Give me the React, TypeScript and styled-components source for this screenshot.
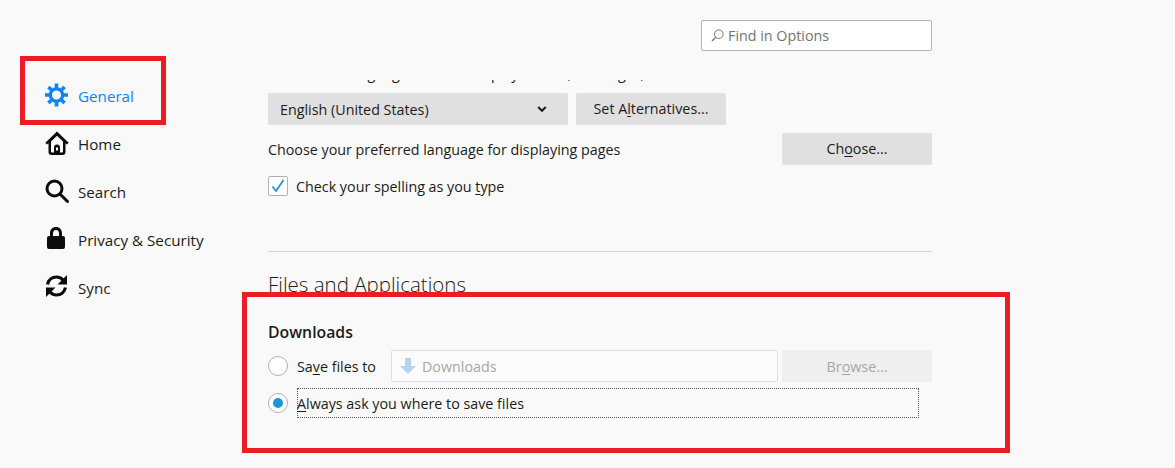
import React from "react";
import styled, { createGlobalStyle } from "styled-components";

const Global = createGlobalStyle`
  html, body { margin: 0; padding: 0; background: #f9f9fa; }
  body { font-family: "Open Sans", "Noto Sans", sans-serif; font-size: 14.3px; color: #1c1c20; }
  #root { width: 1175px; height: 468px; overflow: hidden; }
`;

const Page = styled.div`
  position: relative;
  display: flex;
  width: 1175px;
  height: 468px;
`;

const Sidebar = styled.nav`
  width: 268px;
  flex: none;
  padding: 72px 0 0 45px;
  box-sizing: border-box;
  display: flex;
  flex-direction: column;
`;

const NavItem = styled.div<{ $active?: boolean }>`
  display: flex;
  align-items: center;
  gap: 9px;
  height: 48px;
  font-size: 15.2px;
  color: ${(p) => (p.$active ? "#0a84ff" : "#1c1c20")};
  svg { width: 24px; height: 24px; flex: none; margin-top: -2px; color: ${(p) => (p.$active ? "#0a84ff" : "#0c0c0d")}; }
`;

const Main = styled.main`
  width: 664px;
  flex: none;
  display: flex;
  flex-direction: column;
  padding-top: 20px;
  box-sizing: border-box;
`;

const SearchBox = styled.div`
  align-self: flex-end;
  width: 231px;
  height: 31px;
  box-sizing: border-box;
  background: #fff;
  border: 1px solid #b1b1b3;
  border-radius: 2px;
  display: flex;
  align-items: center;
  gap: 4px;
  padding-left: 9px;
  color: #737373;
  svg { width: 13px; height: 13px; }
`;

const ClippedLine = styled.div`
  height: 3px;
  margin-top: 29px;
  overflow: hidden;
  white-space: nowrap;
  line-height: 20px;
`;

const ClippedText = styled.div`
  margin-top: -16px;
`;

const Row = styled.div<{ $top?: number; $between?: boolean; $gap?: number }>`
  display: flex;
  align-items: center;
  margin-top: ${(p) => p.$top ?? 0}px;
  gap: ${(p) => p.$gap ?? 8}px;
  justify-content: ${(p) => (p.$between ? "space-between" : "flex-start")};
`;

const Select = styled.div`
  width: 300px;
  height: 32px;
  box-sizing: border-box;
  background: #e0e0e1;
  border-radius: 2px;
  padding: 0 21px 0 12px;
  display: flex;
  align-items: center;
  justify-content: space-between;
  svg { width: 10px; height: 10px; }
`;

const Button = styled.div<{ $disabled?: boolean }>`
  width: 150px;
  height: 32px;
  box-sizing: border-box;
  flex: none;
  border-radius: 2px;
  padding-bottom: ${(p) => (p.$disabled ? 0 : 2)}px;
  background: ${(p) => (p.$disabled ? "#efeff0" : "#e0e0e1")};
  color: ${(p) => (p.$disabled ? "#a6a6a8" : "#1c1c20")};
  display: flex;
  align-items: center;
  justify-content: center;
`;

const Key = styled.span`
  text-decoration: underline;
  text-underline-offset: 2px;
  text-decoration-thickness: 1px;
`;

const Checkbox = styled.div`
  width: 20px;
  height: 20px;
  box-sizing: border-box;
  background: #fff;
  border: 1px solid #b1b1b3;
  border-radius: 2px;
  display: flex;
  align-items: center;
  justify-content: center;
  svg { width: 16px; height: 16px; }
`;

const Divider = styled.hr`
  border: none;
  border-top: 1px solid #d7d7db;
  margin: 55px 0 0;
`;

const SectionTitle = styled.h1`
  font-size: 20.5px;
  font-weight: 300;
  margin: 17px 0 0;
  line-height: 30px;
  color: #1c1c20;
`;

const GroupTitle = styled.h2`
  font-size: 15.8px;
  font-weight: 600;
  margin: 23px 0 0;
  line-height: 20px;
`;

const Radio = styled.div<{ $checked?: boolean }>`
  width: 20px;
  height: 20px;
  box-sizing: border-box;
  flex: none;
  background: #fff;
  border: 1px solid #b1b1b3;
  border-radius: 50%;
  display: flex;
  align-items: center;
  justify-content: center;
  &::after {
    content: "";
    display: ${(p) => (p.$checked ? "block" : "none")};
    width: 10px;
    height: 10px;
    border-radius: 50%;
    background: #1f96dc;
  }
`;

const RadioLabel = styled.span`
  width: 94px;
  margin-left: 9px;
  flex: none;
`;

const PathInput = styled.div`
  width: 387px;
  height: 32px;
  box-sizing: border-box;
  flex: none;
  margin-right: 4px;
  background: #fcfcfc;
  border: 1px solid #dfdfe0;
  border-radius: 2px;
  display: flex;
  align-items: center;
  gap: 6px;
  padding-left: 8px;
  color: #a6a6a8;
  svg { width: 16px; height: 16px; }
`;

const FocusLabel = styled.div`
  width: 622px;
  height: 30px;
  box-sizing: border-box;
  border: 1px dotted #55555a;
  display: flex;
  align-items: center;
  white-space: nowrap;
  span:first-child { margin-left: -0.5px; }
`;

const Callout = styled.div<{ $x: number; $y: number; $w: number; $h: number }>`
  position: absolute;
  left: ${(p) => p.$x}px;
  top: ${(p) => p.$y}px;
  width: ${(p) => p.$w}px;
  height: ${(p) => p.$h}px;
  box-sizing: border-box;
  border: 5px solid #ed1c24;
  pointer-events: none;
`;

const Gear = () => (
  <svg viewBox="0 0 24 24" fill="none" stroke="currentColor">
    <circle cx="11.500" cy="12" r="6.200" strokeWidth="3.200" />
    <path strokeWidth="3.600" d="M11.500 .5V5.500M11.500 18.500V23.500M0 12H5M18 12H23M3.400 3.900L6.600 7.100M16.400 16.900L19.600 20.100M19.600 3.900L16.400 7.100M6.600 16.900L3.400 20.100" />
  </svg>
);
const HomeIcon = () => (
  <svg viewBox="0 0 24 24" fill="currentColor">
    <path fillRule="evenodd" d="M12 .5 .3 11.800l1.800 1.800 1.400-1.300V21a3 3 0 0 0 3 3h11a3 3 0 0 0 3-3v-8.700l1.400 1.300 1.800-1.800zM12 4.800 18 10.500V20.500a1 1 0 0 1-1 1H15V16.500a3 3 0 0 0-6 0V21.500H7a1 1 0 0 1-1-1V10.500zM11 16.500h2v3h-2z" />
  </svg>
);
const SearchIcon = () => (
  <svg viewBox="0 0 24 24" fill="none" stroke="currentColor" strokeWidth="3">
    <circle cx="9.500" cy="9.500" r="7.500" />
    <path d="M15 15 22.500 22.500" strokeLinecap="round" strokeWidth="3" />
  </svg>
);
const LockIcon = () => (
  <svg viewBox="0 0 24 24" fill="currentColor">
    <path fillRule="evenodd" d="M11 0C7.300 0 5 2.500 5 6.500V9H4a2 2 0 0 0-2 2v9a2 2 0 0 0 2 2h14a2 2 0 0 0 2-2v-9a2 2 0 0 0-2-2h-1V6.500C17 2.500 14.700 0 11 0zM8 9V6.500C8 4.300 9 3 11 3s3 1.300 3 3.500V9z" />
  </svg>
);
const SyncIcon = () => (
  <svg viewBox="0 0 24 24" fill="none" stroke="currentColor" strokeWidth="3.200">
    <path d="M2.500 9.500C3.500 5 7 2 11.500 2c3 0 5.300 1.300 7 3.500" />
    <path d="M20.500 12.500C19.500 17 16 20 11.500 20c-3 0-5.300-1.300-7-3.500" />
    <path d="M22 0v9.500H12.500z" fill="currentColor" stroke="none" />
    <path d="M1 22v-9.500H10.500z" fill="currentColor" stroke="none" />
  </svg>
);
const Magnifier = () => (
  <svg viewBox="0 0 13 13" fill="none" stroke="#77777a" strokeWidth="1">
    <circle cx="7.800" cy="5.200" r="4.300" />
    <path d="M4.700 8.300 1 12" strokeWidth="1.300" />
  </svg>
);
const Chevron = () => (
  <svg viewBox="0 0 10 10" fill="none" stroke="#1c1c20" strokeWidth="2">
    <path d="M1.200 3 5 6.800 8.800 3" />
  </svg>
);
const Tick = () => (
  <svg viewBox="0 0 16 16" fill="none" stroke="#1f96dc" strokeWidth="1.800">
    <path d="M2.500 8.500 6 13 13.500 2" />
  </svg>
);
const DownArrow = () => (
  <svg viewBox="0 0 16 16" fill="#b3d4f0">
    <path d="M5 0h6v8h5l-8 8-8-8h5z" />
  </svg>
);

export default function App() {
  return (
    <Page>
      <Global />
      <Sidebar>
        <NavItem $active><Gear />General</NavItem>
        <NavItem><HomeIcon />Home</NavItem>
        <NavItem><SearchIcon />Search</NavItem>
        <NavItem><LockIcon />Privacy &amp; Security</NavItem>
        <NavItem><SyncIcon />Sync</NavItem>
      </Sidebar>
      <Main>
        <SearchBox><Magnifier />Find in Options</SearchBox>
        <ClippedLine>
          <ClippedText>Choose the languages used to display menus, messages, and notifications from Firefox.</ClippedText>
        </ClippedLine>
        <Row $top={10}>
          <Select>English (United States)<Chevron /></Select>
          <Button>Set A<Key>l</Key>ternatives...</Button>
        </Row>
        <Row $top={8} $between>
          <span>Choose your preferred language for displaying pages</span>
          <Button>Ch<Key>o</Key>ose...</Button>
        </Row>
        <Row $top={11}>
          <Checkbox><Tick /></Checkbox>
          <span>Check your spelling as you <Key>t</Key>ype</span>
        </Row>
        <Divider />
        <SectionTitle>Files and Applications</SectionTitle>
        <GroupTitle>Downloads</GroupTitle>
        <Row $top={8} $gap={0}>
          <Radio />
          <RadioLabel>Sa<Key>v</Key>e files to</RadioLabel>
          <PathInput><DownArrow />Downloads</PathInput>
          <Button $disabled>Br<Key>o</Key>wse...</Button>
        </Row>
        <Row $top={6} $gap={9}>
          <Radio $checked />
          <FocusLabel><span><Key>A</Key>lways ask you where to save files</span></FocusLabel>
        </Row>
      </Main>
      <Callout $x={20} $y={56} $w={146} $h={69} />
      <Callout $x={242} $y={292} $w={768} $h={161} />
    </Page>
  );
}
